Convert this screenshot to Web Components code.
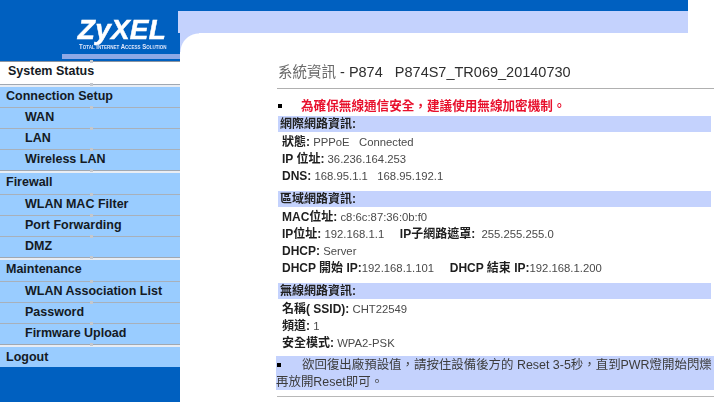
<!DOCTYPE html>
<html lang="zh-Hant">
<head>
<meta charset="utf-8">
<title>P874</title>
<style>
  html, body { margin: 0; background: #fff; }
  body { font-family: "Liberation Sans", "Noto Sans CJK TC", sans-serif; }
</style>
</head>
<body>
<zy-app>
  <zy-sidebar slot="side">
    <zy-nav active>System Status</zy-nav>
    <zy-nav group>Connection Setup</zy-nav>
    <zy-nav sub>WAN</zy-nav>
    <zy-nav sub>LAN</zy-nav>
    <zy-nav sub>Wireless LAN</zy-nav>
    <zy-nav group tall>Firewall</zy-nav>
    <zy-nav sub>WLAN MAC Filter</zy-nav>
    <zy-nav sub>Port Forwarding</zy-nav>
    <zy-nav sub>DMZ</zy-nav>
    <zy-nav group tall>Maintenance</zy-nav>
    <zy-nav sub>WLAN Association List</zy-nav>
    <zy-nav sub>Password</zy-nav>
    <zy-nav sub>Firmware Upload</zy-nav>
    <zy-nav group last>Logout</zy-nav>
  </zy-sidebar>
  <zy-status slot="main">
    <zy-section title="網際網路資訊:">
      <zy-row><b>狀態:</b> PPPoE &nbsp; Connected</zy-row>
      <zy-row><b>IP 位址:</b> 36.236.164.253</zy-row>
      <zy-row><b>DNS:</b> 168.95.1.1 &nbsp; 168.95.192.1</zy-row>
    </zy-section>
    <zy-section title="區域網路資訊:">
      <zy-row><b>MAC位址:</b> c8:6c:87:36:0b:f0</zy-row>
      <zy-row><b>IP位址:</b> 192.168.1.1 &nbsp;&nbsp;&nbsp;&nbsp;<b>IP子網路遮罩:</b> &nbsp;255.255.255.0</zy-row>
      <zy-row><b>DHCP:</b> Server</zy-row>
      <zy-row><b>DHCP 開始 IP:</b>192.168.1.101 &nbsp;&nbsp;&nbsp;&nbsp;<b>DHCP 結束 IP:</b>192.168.1.200</zy-row>
    </zy-section>
    <zy-section title="無線網路資訊:">
      <zy-row><b>名稱( SSID):</b> CHT22549</zy-row>
      <zy-row><b>頻道:</b> 1</zy-row>
      <zy-row><b>安全模式:</b> WPA2-PSK</zy-row>
    </zy-section>
  </zy-status>
</zy-app>

<script>
class ZyApp extends HTMLElement {
  connectedCallback() {
    this.attachShadow({ mode: 'open' });
    this.shadowRoot.innerHTML = `
      <style>
        :host {
          display: grid;
          grid-template-columns: 180px 540px;
          width: 720px;
          height: 402px;
          overflow: hidden;
          filter: blur(0.35px);
        }
        .right { display: flex; flex-direction: column; min-width: 0; }
        .top { width: 508px; height: 11px; background: #0060c0; }
        .band { width: 510px; height: 22px; margin-left: -2px; background: #c4d2fd; position: relative; }
        .corner {
          position: absolute;
          left: 2px;
          top: 22px;
          width: 19px;
          height: 19px;
          background: radial-gradient(circle at 100% 100%, transparent 18px, #c4d2fd 19px);
        }
      </style>
      <slot name="side"></slot>
      <div class="right">
        <div class="top"></div>
        <div class="band"><div class="corner"></div></div>
        <slot name="main"></slot>
      </div>
    `;
  }
}

class ZySidebar extends HTMLElement {
  connectedCallback() {
    this.attachShadow({ mode: 'open' });
    this.shadowRoot.innerHTML = `
      <style>
        :host {
          display: flex;
          flex-direction: column;
          height: 402px;
          background: #0060c0;
        }
        .brand {
          height: 61px;
          box-sizing: border-box;
          position: relative;
          display: flex;
          flex-direction: column;
          align-items: flex-end;
          padding: 18px 14px 0 0;
          color: #fff;
        }
        .logo {
          font: italic 700 28px/24px "Liberation Sans", sans-serif;
          letter-spacing: 0.2px;
          -webkit-text-stroke: 0.5px #fff;
        }
        .tag {
          font: 700 8px/8px "Liberation Sans", sans-serif;
          font-variant: small-caps;
          color: #dfe7fb;
          margin-top: 1px;
          white-space: nowrap;
          transform: scaleX(0.75);
          transform-origin: right center;
        }
        .strip {
          position: absolute;
          left: 62px;
          right: 0;
          top: 54px;
          height: 5px;
          background: #8ea8e6;
        }
      </style>
      <div class="brand">
        <div class="logo">ZyXEL</div>
        <div class="tag">Total Internet Access Solution</div>
        <div class="strip"></div>
      </div>
      <slot></slot>
    `;
  }
}

class ZyNav extends HTMLElement {
  connectedCallback() {
    this.attachShadow({ mode: 'open' });
    this.shadowRoot.innerHTML = `
      <style>
        :host {
          display: flex;
          align-items: center;
          box-sizing: border-box;
          height: 21px;
          padding: 0 0 2px 25px;
          position: relative;
          background: #99ccff;
          border-top: 1px solid #a8b0ba;
          font: 700 12.5px/16px "Liberation Sans", sans-serif;
          color: #141a24;
          white-space: nowrap;
        }
        :host([group]) {
          height: 23px;
          padding: 0 0 1px 6px;
          border-top: 1px solid #a0a8b2;
          box-shadow: inset 0 2px 0 #e8edf4;
        }
        :host([tall]) { height: 24px; }
        :host([last]) { padding: 2px 0 0 6px; }
        :host([active]) {
          height: 23px;
          padding: 0 0 4px 8px;
          background: #fff;
          border-top: 1px solid #8c94a0;
        }
        .tick {
          position: absolute;
          left: 90px;
          top: -2px;
          width: 3px;
          height: 3px;
          background: #c4c8ce;
        }
      </style>
      <span class="tick"></span><slot></slot>
    `;
  }
}

class ZyStatus extends HTMLElement {
  connectedCallback() {
    this.attachShadow({ mode: 'open' });
    this.shadowRoot.innerHTML = `
      <style>
        :host {
          display: block;
          padding: 28px 6px 0 98px;
          color: #4a4a4a;
          font: 11.3px/17px "Liberation Sans", "Noto Sans CJK TC", sans-serif;
        }
        h1 {
          margin: 0 0 0 -1px;
          height: 26px;
          padding: 0 0 1px 1px;
          font: 400 14.5px/22px "Liberation Sans", "Noto Sans CJK TC", sans-serif;
          color: #2e2e2e;
          border-bottom: 1px solid #b0b0b0;
          white-space: pre;
        }
        h1 span { color: #6a6a6a; }
        .warn {
          display: flex;
          align-items: center;
          height: 27px;
          box-sizing: border-box;
          padding-top: 7px;
          font-size: 12.6px;
          font-weight: 700;
          color: #e8112d;
        }
        .dot, .note-dot {
          display: inline-block;
          width: 4px;
          height: 4px;
          background: #000;
          flex: none;
        }
        .dot { margin-right: 19px; }
        .note {
          margin: 4px 0 0 -2px;
          width: 438px;
          height: 34px;
          box-sizing: border-box;
          padding-top: 1px;
          background: #c4d2fd;
          color: #3c3c3c;
          font-size: 12.45px;
          line-height: 17px;
          white-space: nowrap;
        }
        .note-dot { margin: 0 21px 2px 1px; vertical-align: middle; }
        hr { margin: 6px 0 0 -1px; width: 437px; border: 0; border-top: 1px solid #b8b8b8; }
      </style>
      <h1><span>系統資訊</span> - P874   P874S7_TR069_20140730</h1>
      <div class="warn"><span class="dot"></span><span>為確保無線通信安全，建議使用無線加密機制。</span></div>
      <slot></slot>
      <div class="note"><span class="note-dot"></span>欲回復出廠預設值，請按住設備後方的 Reset 3-5秒，直到PWR燈開始閃爍<br>再放開Reset即可。</div>
      <hr>
    `;
  }
}

class ZySection extends HTMLElement {
  connectedCallback() {
    this.attachShadow({ mode: 'open' });
    this.shadowRoot.innerHTML = `
      <style>
        :host { display: block; padding-bottom: 6px; }
        :host(:last-of-type) { padding-bottom: 0; }
        .head {
          height: 16px;
          width: 433px;
          padding-left: 2px;
          box-sizing: border-box;
          background: #c4d2fd;
          font-weight: 700;
          font-size: 12px;
          line-height: 16px;
          color: #222;
        }
        .rows { padding: 2px 0 0 4px; }
      </style>
      <div class="head">${this.getAttribute('title')}</div>
      <div class="rows"><slot></slot></div>
    `;
    this.removeAttribute('title');
  }
}

class ZyRow extends HTMLElement {
  connectedCallback() {
    this.attachShadow({ mode: 'open' });
    this.shadowRoot.innerHTML = `
      <style>
        :host { display: block; height: 17px; white-space: nowrap; }
        ::slotted(b) { color: #1e1e1e; font-weight: 700; font-size: 12px; }
      </style>
      <slot></slot>
    `;
  }
}

customElements.define('zy-app', ZyApp);
customElements.define('zy-sidebar', ZySidebar);
customElements.define('zy-nav', ZyNav);
customElements.define('zy-status', ZyStatus);
customElements.define('zy-section', ZySection);
customElements.define('zy-row', ZyRow);
</script>
</body>
</html>
